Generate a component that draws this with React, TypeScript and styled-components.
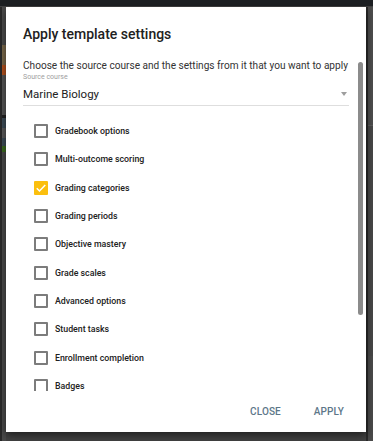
import styled, { createGlobalStyle } from 'styled-components';

const GlobalStyle = createGlobalStyle`
  html, body {
    margin: 0;
    padding: 0;
    background: #3f3f3f;
    font-family: Roboto, "Noto Sans", Arial, sans-serif;
  }
  *, *::before, *::after {
    box-sizing: border-box;
  }
`;

const options = [
  { label: 'Gradebook options', checked: false },
  { label: 'Multi-outcome scoring', checked: false },
  { label: 'Grading categories', checked: true },
  { label: 'Grading periods', checked: false },
  { label: 'Objective mastery', checked: false },
  { label: 'Grade scales', checked: false },
  { label: 'Advanced options', checked: false },
  { label: 'Student tasks', checked: false },
  { label: 'Enrollment completion', checked: false },
  { label: 'Badges', checked: false },
];

const Page = styled.div`
  width: 373px;
  height: 441px;
  overflow: hidden;
  display: flex;
  flex-direction: column;
  background: #424242;
`;

const TopBar = styled.div`
  height: 6px;
  background: #1d2023;
  flex-shrink: 0;
`;

const Stage = styled.div`
  flex: 1;
  display: flex;
  padding-top: 1px;
`;

const SideStrip = styled.div<{ $width: number }>`
  width: ${(p) => p.$width}px;
  flex-shrink: 0;
  display: flex;
  flex-direction: column;
  background: #4a4a4a;
  border-left: 2px solid #2a2a2a;
`;

const StripBlock = styled.div<{ $h: number; $color: string }>`
  height: ${(p) => p.$h}px;
  background: ${(p) => p.$color};
`;

const Dialog = styled.div`
  position: relative;
  width: 360px;
  height: 425px;
  flex-shrink: 0;
  background: #fff;
  box-shadow: 0 3px 8px rgba(0, 0, 0, 0.55);
  display: flex;
  flex-direction: column;
`;

const Title = styled.h2`
  margin: 18px 0 0 17px;
  font-size: 14px;
  line-height: 18px;
  font-weight: 500;
  color: #212121;
`;

const Body = styled.div`
  flex: 1;
  overflow: hidden;
  padding: 0 17px;
  margin-top: 16px;
`;

const Description = styled.p`
  margin: 0;
  font-size: 10.1px;
  line-height: 14px;
  color: #333;
  white-space: nowrap;
`;

const FieldLabel = styled.div`
  font-size: 7px;
  line-height: 9px;
  color: #9e9e9e;
`;

const Select = styled.div`
  display: flex;
  align-items: center;
  justify-content: space-between;
  margin-top: 4px;
  padding-bottom: 3px;
  border-bottom: 1px solid #dedede;
  font-size: 11.5px;
  line-height: 16px;
  color: #222;
`;

const Arrow = styled.span`
  width: 0;
  height: 0;
  margin-right: 2px;
  border-left: 3.5px solid transparent;
  border-right: 3.5px solid transparent;
  border-top: 4px solid #9e9e9e;
`;

const List = styled.div`
  height: 274px;
  overflow: hidden;
  margin-top: 11px;
  padding-left: 11px;
`;

const Row = styled.label`
  display: flex;
  align-items: center;
  height: 28.33px;
  gap: 7px;
  font-size: 8.8px;
  font-weight: 500;
  color: #212121;
`;

const Box = styled.span<{ $checked: boolean }>`
  width: 14px;
  height: 14px;
  flex-shrink: 0;
  border-radius: 1px;
  display: flex;
  align-items: center;
  justify-content: center;
  border: ${(p) => (p.$checked ? 'none' : '2px solid #7c7c7c')};
  background: ${(p) => (p.$checked ? '#fbbf0e' : '#fff')};
`;

const Footer = styled.div`
  height: 40px;
  display: flex;
  align-items: center;
  justify-content: flex-end;
  gap: 17px;
  padding: 0 14px 2px 0;
`;

const TextButton = styled.button`
  border: none;
  background: none;
  padding: 4px 8px;
  font-family: inherit;
  font-size: 10px;
  font-weight: 500;
  letter-spacing: 0.1px;
  color: #5d7789;
  cursor: pointer;
`;

const ScrollThumb = styled.div`
  position: absolute;
  right: 3px;
  top: 55px;
  width: 5px;
  height: 253px;
  border-radius: 3px;
  background: #8b8b8b;
`;

const Check = () => (
  <svg width="12" height="12" viewBox="0 0 24 24">
    <path d="M3.5 12.5l5.5 5.5L20.5 6" fill="none" stroke="#fff" strokeWidth="3" />
  </svg>
);

export default function App() {
  return (
    <>
      <GlobalStyle />
      <Page>
        <TopBar />
        <Stage>
          <SideStrip $width={6}>
            <StripBlock $h={38} $color="#4b4b4b" />
            <StripBlock $h={20} $color="#7b6a4c" />
            <StripBlock $h={10} $color="#b4521f" />
            <StripBlock $h={40} $color="#555" />
            <StripBlock $h={3} $color="#222" />
            <StripBlock $h={10} $color="#3e4d58" />
            <StripBlock $h={10} $color="#5a5a5a" />
            <StripBlock $h={8} $color="#3e4d58" />
            <StripBlock $h={6} $color="#3c6b20" />
          </SideStrip>
          <Dialog>
            <Title>Apply template settings</Title>
            <Body>
              <Description>Choose the source course and the settings from it that you want to apply</Description>
              <FieldLabel>Source course</FieldLabel>
              <Select>
                Marine Biology
                <Arrow />
              </Select>
              <List>
                {options.map((o) => (
                  <Row key={o.label}>
                    <Box $checked={o.checked}>{o.checked && <Check />}</Box>
                    {o.label}
                  </Row>
                ))}
              </List>
            </Body>
            <Footer>
              <TextButton>CLOSE</TextButton>
              <TextButton>APPLY</TextButton>
            </Footer>
            <ScrollThumb />
          </Dialog>
          <SideStrip $width={7}>
            <StripBlock $h={118} $color="#4d4d4d" />
            <StripBlock $h={1} $color="#5c5c5c" />
            <StripBlock $h={230} $color="#474747" />
          </SideStrip>
        </Stage>
      </Page>
    </>
  );
}
